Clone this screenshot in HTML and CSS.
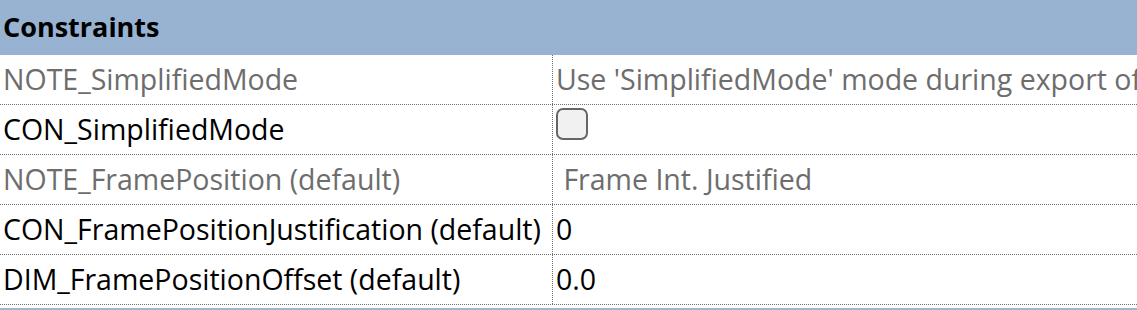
FILE: index.html
```html
<!DOCTYPE html>
<html lang="en">

<head>
    <meta charset="UTF-8">
    <title>Constraints</title>
    <link rel="stylesheet" href="styles.css">
</head>

<body>

    <div class="section-header">Constraints</div>

    <div class="props">
        <div class="prop-row note">
            <div class="name">NOTE_SimplifiedMode</div>
            <div class="value">Use 'SimplifiedMode' mode during export of the model</div>
        </div>
        <div class="prop-row">
            <div class="name">CON_SimplifiedMode</div>
            <div class="value"><span class="checkbox"></span></div>
        </div>
        <div class="prop-row note">
            <div class="name">NOTE_FramePosition (default)</div>
            <div class="value">&nbsp;Frame Int. Justified</div>
        </div>
        <div class="prop-row">
            <div class="name">CON_FramePositionJustification (default)</div>
            <div class="value">0</div>
        </div>
        <div class="prop-row">
            <div class="name">DIM_FramePositionOffset (default)</div>
            <div class="value">0.0</div>
        </div>
    </div>

    <div class="section-footer"></div>

</body>

</html>
```

FILE: styles.css
```css
body {
    margin: 0;
    padding: 0;
    background: white;
    font-family: "Open Sans", "Noto Sans", sans-serif;
    overflow: hidden;
}

.section-header {
    height: 54px;
    background-color: #97b3d1;
    color: #000;
    font-size: 27px;
    font-weight: bold;
    line-height: 54px;
    padding-left: 3px;
    border-bottom: 1px solid #9cb5cf;
}

.prop-row {
    display: flex;
    height: 50px;
    box-sizing: border-box;
    border-bottom: 1px dotted #6f6f6f;
    font-size: 28.5px;
    line-height: 48px;
    color: #000;
    white-space: nowrap;
}

.prop-row .name {
    flex: 0 0 553px;
    box-sizing: border-box;
    padding-left: 3px;
    border-right: 1px dotted #6f6f6f;
    overflow: hidden;
}

.prop-row .value {
    flex: 1;
    padding-left: 3px;
    overflow: hidden;
}

.prop-row.note {
    color: #6d6d6d;
}

.checkbox {
    display: inline-block;
    width: 28px;
    height: 28px;
    margin-top: 3px;
    border: 2px solid #666;
    border-radius: 7px;
    background: #f1f1f1;
    vertical-align: top;
}

.section-footer {
    margin-top: 3px;
    height: 3px;
    background: #a3b6c9;
}
```
